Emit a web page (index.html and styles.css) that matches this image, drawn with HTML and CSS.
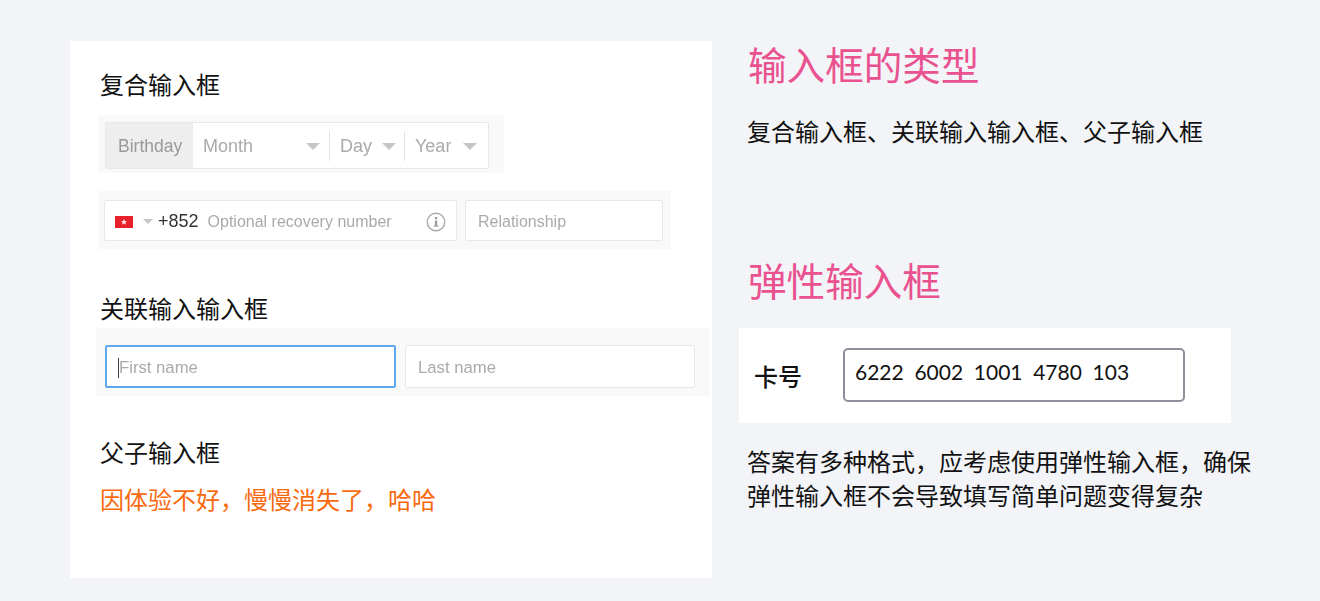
FILE: index.html
```html
<!DOCTYPE html>
<html lang="zh-CN">
<head>
  <meta charset="UTF-8">
  <title>输入框的类型</title>
  <link rel="stylesheet" href="styles.css">
</head>
<body>
  <div class="page">
    <div class="card">
      <h3 class="label label-first">复合输入框</h3>
      <div class="strip strip-birthday">
        <div class="box box-birthday">
          <span class="addon">Birthday</span>
          <span class="select select-month">Month<i class="caret"></i></span>
          <span class="select select-day">Day<i class="caret"></i></span>
          <span class="select select-year">Year<i class="caret"></i></span>
        </div>
      </div>
      <div class="strip strip-phone">
        <div class="box box-phone">
          <svg class="flag" width="18" height="12" viewBox="0 0 18 12">
            <rect width="18" height="12" fill="#e8202a"/>
            <path d="M9 3l.9 2 2.100.2-1.600 1.400.5 2.100L9 7.600 7.100 8.700l.5-2.100L6 5.200 8.100 5z" fill="#fbe3e4"/>
          </svg>
          <i class="caret caret-small"></i>
          <span class="code">+852</span>
          <span class="hint">Optional recovery number</span>
          <svg class="info" width="20" height="20" viewBox="0 0 20 20">
            <circle cx="10" cy="10" r="8.800" fill="none" stroke="#aaa" stroke-width="1.400"/>
            <rect x="9" y="5" width="2.200" height="2.200" fill="#999"/>
            <rect x="9" y="8.600" width="2.200" height="5.200" fill="#999"/>
            <rect x="7.800" y="13.400" width="4.600" height="1.200" fill="#999"/>
          </svg>
        </div>
        <div class="box box-relation"><span class="hint">Relationship</span></div>
      </div>

      <h3 class="label label-second">关联输入输入框</h3>
      <div class="strip strip-name">
        <div class="box box-name box-focus"><i class="cursor"></i><span class="hint">First name</span></div>
        <div class="box box-name"><span class="hint">Last name</span></div>
      </div>

      <h3 class="label label-third">父子输入框</h3>
      <p class="note">因体验不好&#xFF0C;慢慢消失了&#xFF0C;哈哈</p>
    </div>

    <div class="side">
      <h2 class="title title-first">输入框的类型</h2>
      <p class="text">复合输入框、关联输入输入框、父子输入框</p>

      <h2 class="title title-second">弹性输入框</h2>
      <div class="demo">
        <span class="demo-label">卡号</span>
        <div class="demo-input">6222 6002 1001 4780 103</div>
      </div>
      <p class="text text-answer">答案有多种格式&#xFF0C;应考虑使用弹性输入框&#xFF0C;确保弹性输入框不会导致填写简单问题变得复杂</p>
    </div>
  </div>
</body>
</html>
```

FILE: styles.css
```css
* {
  box-sizing: border-box;
}

body {
  margin: 0;
  height: 601px;
  overflow: hidden;
  background: #f3f4f8;
  color: #111;
  font-family: "Liberation Sans", "Noto Sans CJK SC", sans-serif;
}

.page {
  display: flex;
  gap: 27px;
  padding: 41px 0 0 70px;
}

/* left card */
.card {
  width: 642px;
  height: 537px;
  background: #fff;
  padding-left: 30px;
}

.label {
  margin: 0;
  font-size: 24px;
  font-weight: 400;
  line-height: 34px;
  font-family: "Noto Sans CJK SC", sans-serif;
}

.label-first {
  margin-top: 26px;
}

.label-second {
  margin-top: 42px;
}

.label-third {
  margin-top: 39px;
}

.note {
  margin: 13px 0 0;
  font-size: 24px;
  line-height: 34px;
  color: #f96a0e;
  font-family: "Noto Sans CJK SC", sans-serif;
}

.strip {
  display: flex;
  background: #f9f9f9;
  margin-left: -2px;
  filter: blur(0.4px);
}

.strip-birthday {
  width: 406px;
  height: 58px;
  margin-top: 14px;
  padding: 7px 0 0 7px;
}

.strip-phone {
  width: 573px;
  height: 58px;
  margin-top: 18px;
  padding: 9px 0 0 6px;
  gap: 8px;
}

.strip-name {
  width: 614px;
  height: 68px;
  margin-top: 3px;
  margin-left: -4px;
  padding: 17px 0 0 9px;
  gap: 9px;
}

.box {
  display: flex;
  align-items: center;
  padding-top: 2px;
  background: #fff;
  border: 1px solid #e8e8e8;
  border-radius: 2px;
  font-size: 18px;
  color: #aaa;
}

.box-birthday {
  width: 384px;
  height: 47px;
  padding-top: 0;
}

.addon {
  display: flex;
  align-items: center;
  width: 87px;
  height: 100%;
  padding: 2px 0 0 12px;
  background: #eee;
  color: #999;
  font-size: 17.5px;
}

.select {
  display: flex;
  align-items: center;
  justify-content: space-between;
  height: 30px;
  padding: 2px 0 0 10px;
}

.select-month {
  width: 137px;
  padding-right: 9px;
  border-right: 1px solid #e4e4e4;
}

.select-day {
  width: 75px;
  padding-right: 8px;
  border-right: 1px solid #e4e4e4;
}

.select-year {
  width: 81px;
  padding-right: 9px;
}

.caret {
  width: 0;
  height: 0;
  border-left: 7px solid transparent;
  border-right: 7px solid transparent;
  border-top: 7px solid #c6c6c6;
}

.caret-small {
  border-left-width: 5px;
  border-right-width: 5px;
  border-top-width: 5px;
  margin-left: 10px;
}

.box-phone {
  width: 353px;
  height: 41px;
  padding-left: 10px;
}

.flag {
  flex: none;
}

.code {
  margin-left: 5px;
  color: #333;
}

.hint {
  color: #aaa;
  font-size: 16px;
}

.box-phone .hint {
  margin-left: 9px;
}

.info {
  margin-left: 34px;
}

.box-relation {
  width: 198px;
  height: 41px;
  padding-left: 12px;
}

.box-name {
  width: 290px;
  height: 43px;
  padding-left: 12px;
}

.box-name .hint {
  font-size: 16.7px;
}

.box-focus {
  width: 291px;
  padding-left: 11px;
  border: 2px solid #5fa8f0;
}

.cursor {
  width: 1px;
  height: 20px;
  background: #444;
}

/* right column */
.side {
  width: 514px;
}

.title {
  margin: 0;
  padding-left: 9px;
  font-size: 38.6px;
  font-weight: 400;
  line-height: 48px;
  color: #e9518f;
  font-family: "Noto Sans CJK SC", sans-serif;
}

.title-first {
  margin-top: -2px;
}

.title-second {
  margin-top: 107px;
}

.text {
  margin: 0;
  padding-left: 8px;
  font-size: 24px;
  line-height: 34px;
  font-family: "Noto Sans CJK SC", sans-serif;
}

.title-first + .text {
  margin-top: 27px;
}

.demo {
  display: flex;
  align-items: center;
  width: 492px;
  height: 95px;
  margin-top: 25px;
  padding-left: 15px;
  background: #fff;
}

.demo-label {
  width: 89px;
  font-size: 24px;
  font-weight: 500;
  font-family: "Noto Sans CJK SC", sans-serif;
}

.demo-input {
  width: 342px;
  height: 54px;
  margin-top: -1px;
  padding: 9px 0 0 10px;
  border: 2px solid #8e8f9b;
  border-radius: 5px;
  font-family: "Lato", sans-serif;
  font-size: 21px;
  word-spacing: 5.3px;
}

.text-answer {
  margin-top: 21px;
}
```
